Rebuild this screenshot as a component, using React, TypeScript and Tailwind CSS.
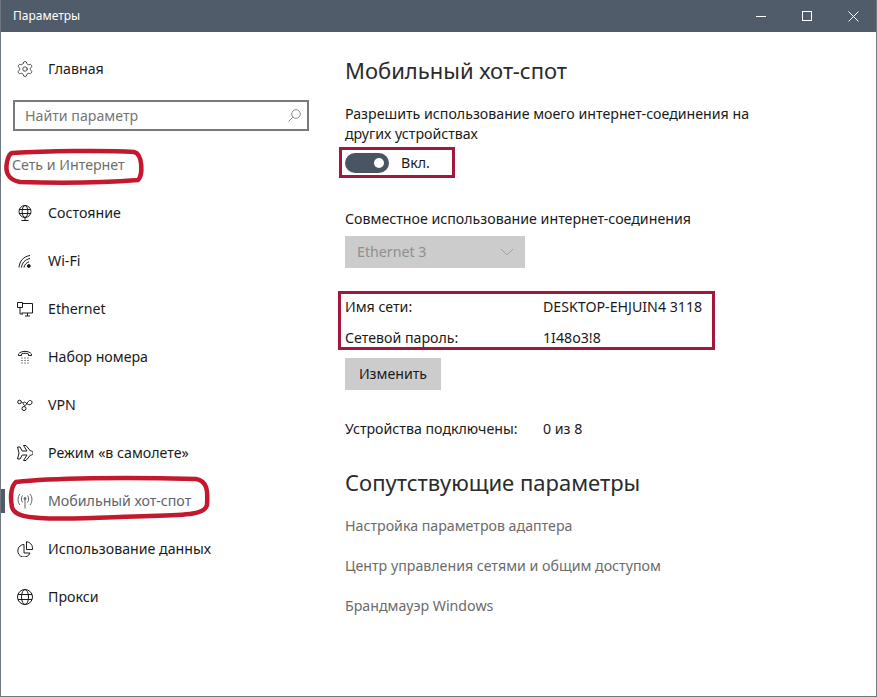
import { ReactNode } from "react";
import { Settings } from "lucide-react";

const stroke = {
  fill: "none",
  stroke: "currentColor",
  strokeWidth: 1,
} as const;

function Icon({ children }: { children: ReactNode }) {
  return (
    <svg width={16} height={16} viewBox="0 0 16 16" {...stroke} className="shrink-0">
      {children}
    </svg>
  );
}

const icons: Record<string, ReactNode> = {
  status: (
    <Icon>
      <circle cx="8" cy="6.5" r="6" />
      <ellipse cx="8" cy="6.5" rx="2.8" ry="6" />
      <path d="M2 4.5h12M2 8.5h12M8 12.5v2.5M4.5 15.5h7" />
    </Icon>
  ),
  wifi: (
    <Icon>
      <path d="M2 14.5C2.5 8 6.5 3.5 13 2.5M4.5 14.5C5 10 8 6.5 13 5.5M7 14.5C7.3 12 9.5 9.5 12 8.8" />
      <circle cx="11.8" cy="13" r="1.4" fill="currentColor" />
    </Icon>
  ),
  ethernet: (
    <Icon>
      <path d="M5.5 2.5h10v9.5H4.5M8 15h5M10.5 12v3" />
      <path d="M.5 1.5h5v5h-5zM3 6.5v6.5h3" />
    </Icon>
  ),
  dial: (
    <Icon>
      <path d="M1.5 6.5V5C4 1.5 12 1.5 14.5 5v1.500h-3V5C9.500 4 6.500 4 4.500 5v1.500z" />
      <path
        d="M4.500 9h1M7.500 9h1M10.500 9h1M4.500 11.500h1M7.500 11.500h1M10.500 11.500h1M4.500 14h1M7.500 14h1M10.500 14h1"
        strokeWidth={1.2}
      />
    </Icon>
  ),
  vpn: (
    <Icon>
      <circle cx="2.500" cy="5" r="1.800" />
      <circle cx="7" cy="11.500" r="2" />
      <path d="M4.300 5C6 5 6.500 8 7.500 8.500 9 9.500 10 5 12.500 3.500 14 3 15.500 4.500 15 6c-.6 1.800-3 2.300-4.500 1.200L8.500 5.500C7.500 4.500 7 5 6 6" />
    </Icon>
  ),
  plane: (
    <Icon>
      <path d="M.5 2h2.500l2.200 4H10L6.500.5H9L13.500 6h1c1 0 1.500 1 1.500 2s-.5 2-1.500 2h-1L9 15.500H6.500L10 10H5.200L3 14H.5L2 8z" />
    </Icon>
  ),
  hotspot: (
    <Icon>
      <circle cx="8" cy="5.500" r="1" fill="currentColor" />
      <path d="M8 6v9.500M5.500 2.500c-1.500 2-1.500 5 0 7M10.500 2.500c1.500 2 1.500 5 0 7M3 1c-2.600 3-2.600 8 0 11M13 1c2.600 3 2.600 8 0 11" />
    </Icon>
  ),
  usage: (
    <Icon>
      <path d="M7 3.500a6.300 6.300 0 1 0 6 8.500H7z" />
      <path d="M9.500.7a6.500 6.500 0 0 1 6 6v1.800h-6z" />
    </Icon>
  ),
  proxy: (
    <Icon>
      <circle cx="8" cy="8" r="7.500" />
      <ellipse cx="8" cy="8" rx="3.500" ry="7.500" />
      <path d="M1 5.500h14M1 10.500h14" />
    </Icon>
  ),
};

const navItems = [
  { key: "status", label: "Состояние" },
  { key: "wifi", label: "Wi-Fi" },
  { key: "ethernet", label: "Ethernet" },
  { key: "dial", label: "Набор номера" },
  { key: "vpn", label: "VPN" },
  { key: "plane", label: "Режим «в самолете»" },
  { key: "hotspot", label: "Мобильный хот-спот", active: true },
  { key: "usage", label: "Использование данных" },
  { key: "proxy", label: "Прокси" },
];

const links = [
  "Настройка параметров адаптера",
  "Центр управления сетями и общим доступом",
  "Брандмауэр Windows",
];

export default function App() {
  return (
    <div className="relative w-[877px] h-[697px] overflow-hidden flex flex-col bg-white border-x border-b border-[#6f7780] font-['Noto_Sans',sans-serif] text-[14.2px] text-[#1a1a1a]">
      <header className="-mx-px h-8 shrink-0 flex items-center justify-between bg-[#515c6b] text-white">
        <span className="pl-[13px] text-[12px]">Параметры</span>
        <div className="flex items-center pr-px">
          <div className="w-[46px] h-8 flex items-center justify-center">
            <div className="w-[10px] h-px bg-white" />
          </div>
          <div className="w-[46px] h-8 flex items-center justify-center">
            <div className="w-[10px] h-[10px] border border-white" />
          </div>
          <div className="w-[46px] h-8 flex items-center justify-center">
            <svg width={11} height={11} viewBox="0 0 11 11" fill="none" stroke="white">
              <path d="M.5.500l10 10M10.500.500l-10 10" />
            </svg>
          </div>
        </div>
      </header>

      <div className="flex flex-1 min-h-0">
        <aside className="w-[344px] shrink-0 pt-[13px]">
          <div className="h-12 flex items-center pl-[15px] gap-[14px]">
            <Settings size={18} strokeWidth={1} className="shrink-0" />
            <span>Главная</span>
          </div>
          <div className="ml-3 mt-[7px] w-[296px] h-[31px] flex items-center justify-between border-2 border-[#7a7a7a] pl-[10px] pr-[6px] text-[#767676]">
            <span>Найти параметр</span>
            <svg width={13} height={13} viewBox="0 0 13 13" fill="none" stroke="#8a8a8a">
              <circle cx="8" cy="5" r="4.300" />
              <path d="M5 8l-4.500 4.500" />
            </svg>
          </div>
          <div className="ml-[11px] mt-6 mb-[14px] h-5 leading-5 text-[#6e6e6e]">Сеть и Интернет</div>
          <nav>
            {navItems.map((item) => (
              <div
                key={item.key}
                className={
                  item.active
                    ? "relative h-12 flex items-center pl-4 gap-[15px] text-[#5e646b]"
                    : "h-12 flex items-center pl-4 gap-[15px]"
                }
              >
                {item.active && <div className="absolute left-0 top-3 w-1 h-6 bg-[#515c6b]" />}
                {icons[item.key]}
                <span>{item.label}</span>
              </div>
            ))}
          </nav>
        </aside>

        <main className="flex-1 min-w-0">
          <h1 className="mt-[22px] h-8 leading-8 text-[22px] text-[#2b2b2b]">Мобильный хот-спот</h1>
          <p className="mt-[18px] w-[420px] leading-5">
            Разрешить использование моего интернет-соединения на других устройствах
          </p>

          <div className="-ml-[6px] mt-[3px] w-[116px] h-[31px] flex items-center gap-3 border-[3px] border-[#a3173c] pl-[3px]">
            <div className="w-11 h-5 rounded-full bg-[#4a5563] flex items-center justify-end pr-[5px]">
              <div className="w-[10px] h-[10px] rounded-full bg-white" />
            </div>
            <span>Вкл.</span>
          </div>

          <div className="mt-[31px] h-5 leading-5">Совместное использование интернет-соединения</div>
          <div className="mt-[7px] w-[180px] h-8 flex items-center justify-between bg-[#cccccc] pl-3 pr-[11px] text-[#8f8f8f]">
            <span>Ethernet 3</span>
            <svg width={14} height={8} viewBox="0 0 14 8" fill="none" stroke="#a0a0a0">
              <path d="M1 1l6 6 6-6" />
            </svg>
          </div>

          <div className="-ml-[7px] mt-[23px] w-[377px] h-[59px] border-[3px] border-[#a3173c] pl-1 pt-[3px] flex flex-col gap-[11px]">
            <div className="h-5 leading-5 flex">
              <span className="w-[198px]">Имя сети:</span>
              <span>DESKTOP-EHJUIN4 3118</span>
            </div>
            <div className="h-5 leading-5 flex">
              <span className="w-[198px]">Сетевой пароль:</span>
              <span>1I48o3!8</span>
            </div>
          </div>

          <button className="mt-2 w-24 h-8 bg-[#cccccc] text-center">Изменить</button>

          <div className="mt-[29px] h-5 leading-5 flex">
            <span className="w-[198px]">Устройства подключены:</span>
            <span>0 из 8</span>
          </div>

          <h2 className="mt-[27px] h-8 leading-8 text-[22px] text-[#2b2b2b]">Сопутствующие параметры</h2>

          <div className="mt-[18px] flex flex-col gap-5 text-[#6b6b6b]">
            {links.map((link) => (
              <div key={link} className="h-5 leading-5">
                {link}
              </div>
            ))}
          </div>
        </main>
      </div>

      {/* hand-drawn marks over the sidebar */}
      <svg
        width={877}
        height={697}
        className="absolute -left-px top-0 pointer-events-none"
        fill="none"
        stroke="#c4182f"
        strokeWidth={4.5}
      >
        <path d="M12 153C45 151 105 150 134 152C143 154 143 176 138 180C100 183 50 183 20 182C8 180 5 172 7 162C8 157 9 154 12 153Z" />
        <path d="M16 482C50 478 125 477 196 479C207 481 208 490 207 505C205 514 190 515 150 516C110 517 70 520 40 518C25 517 14 515 12 507C10 497 11 486 16 482Z" />
      </svg>
    </div>
  );
}
